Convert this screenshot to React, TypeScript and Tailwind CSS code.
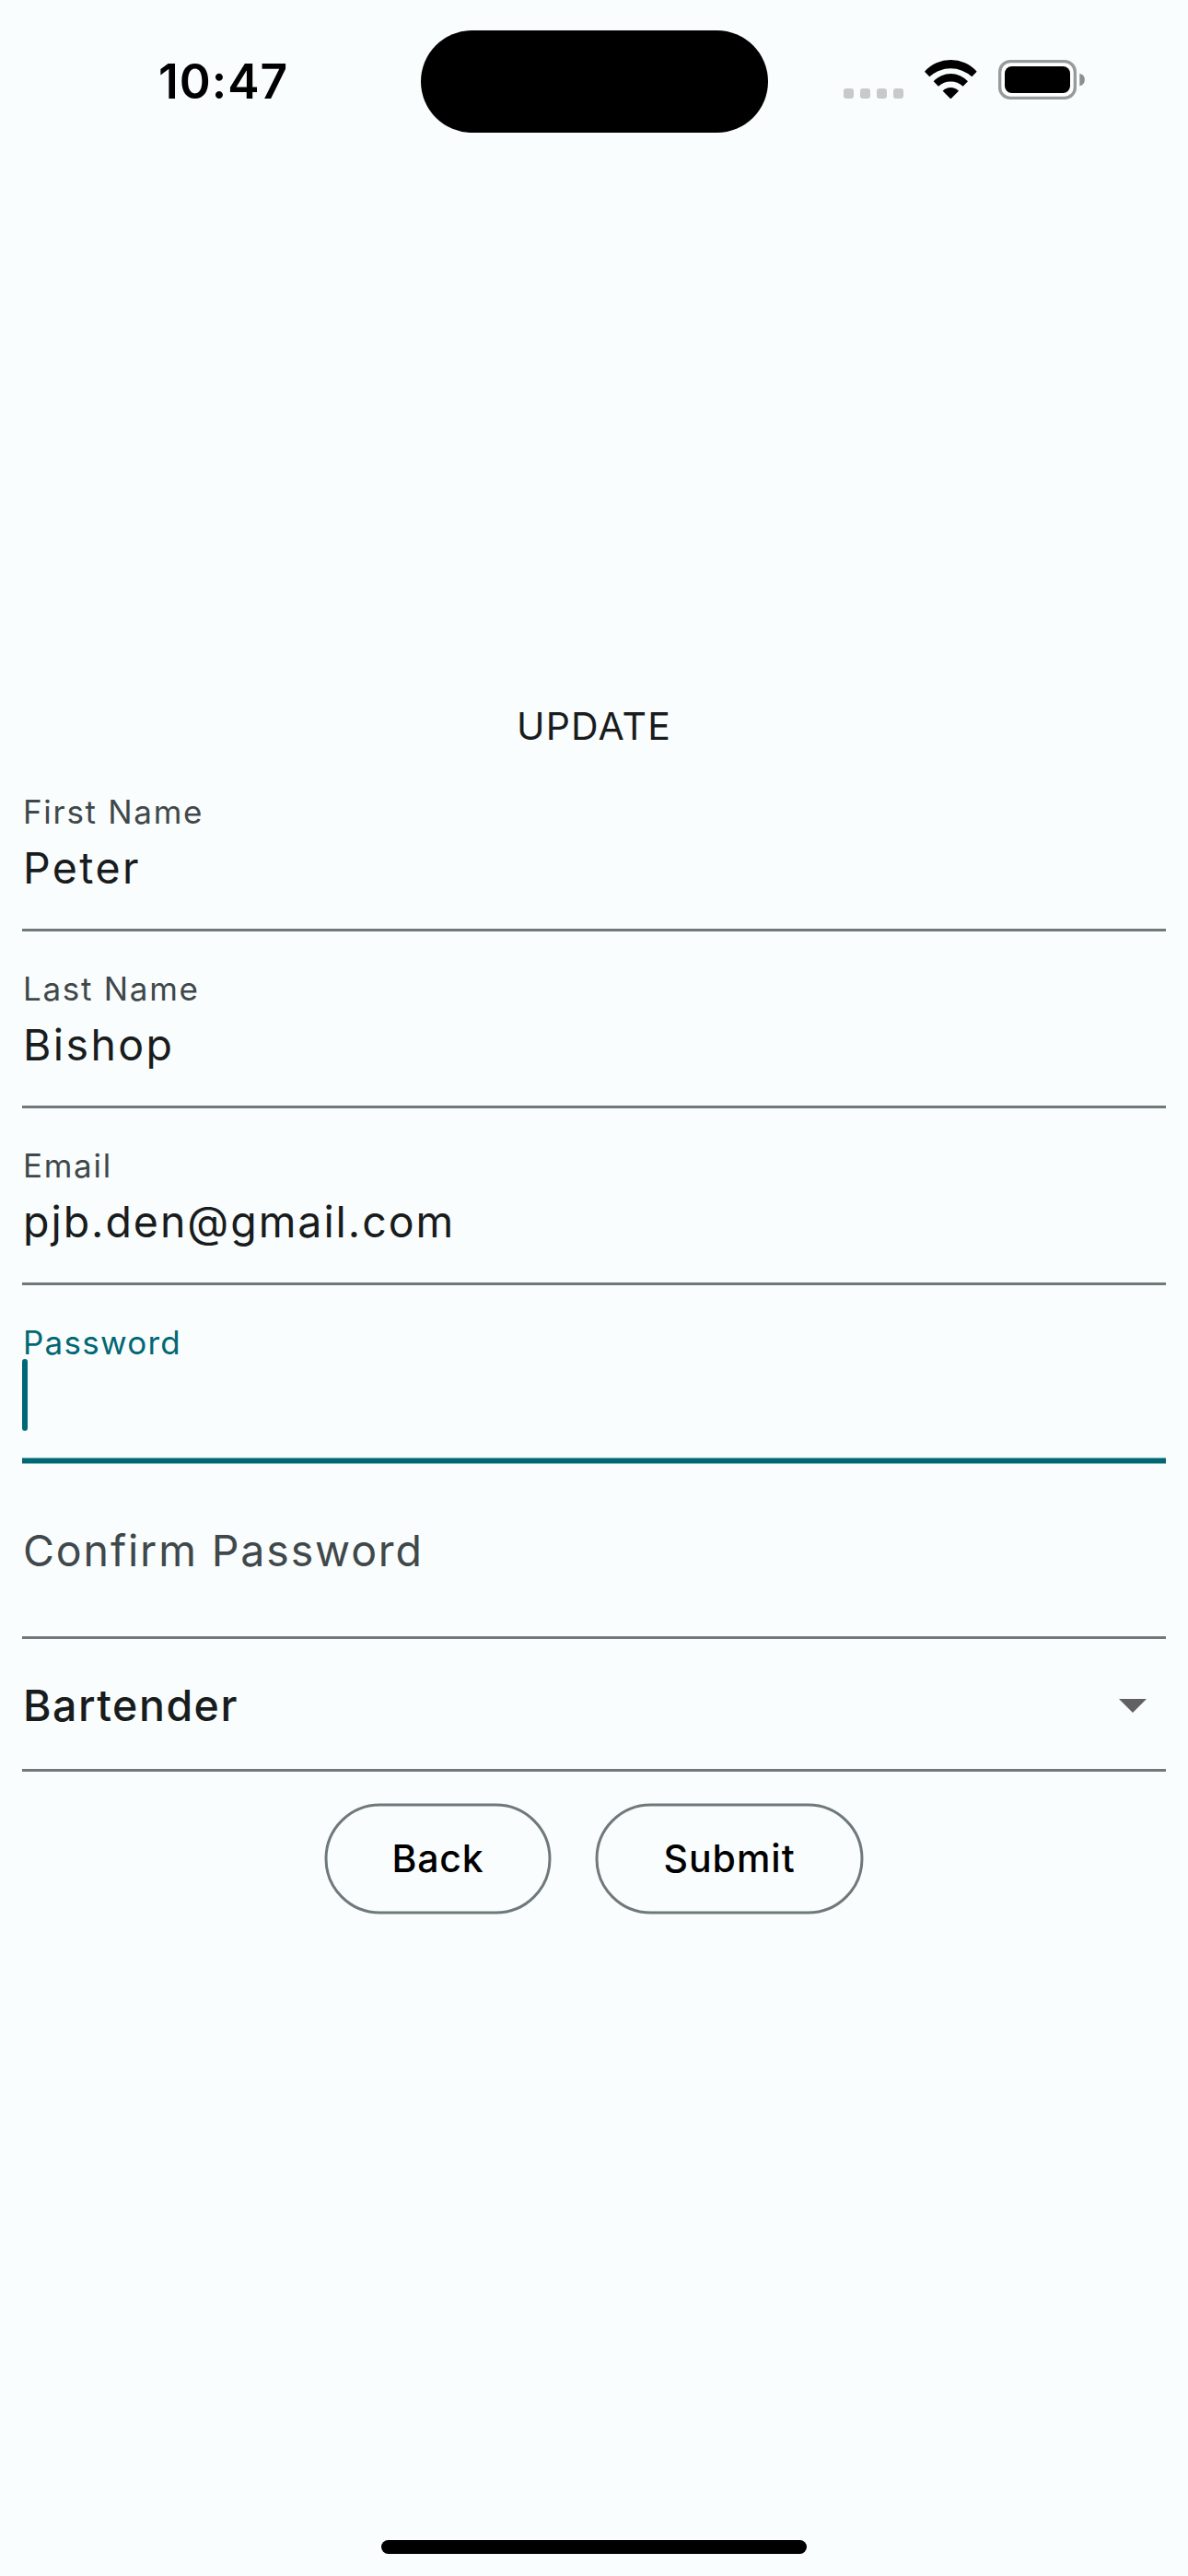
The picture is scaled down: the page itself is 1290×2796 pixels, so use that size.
import type { ReactNode } from 'react'

function StatusBar() {
  return (
    <header className="flex h-[177px] items-start text-black">
      <div className="mt-[58px] ml-[172px] w-[285px] text-[51.5px] leading-[60px] font-semibold tracking-[1px]">
        10:47
      </div>
      <div className="mt-[33px] h-[111px] w-[377px] rounded-full bg-black" />
      <div className="mt-[96px] ml-[82px] flex gap-[7px]">
        <i className="size-[11px] rounded-[3px] bg-[#c8cac9]" />
        <i className="size-[11px] rounded-[3px] bg-[#c8cac9]" />
        <i className="size-[11px] rounded-[3px] bg-[#c8cac9]" />
        <i className="size-[11px] rounded-[3px] bg-[#c8cac9]" />
      </div>
      <svg className="mt-[64px] ml-[22px] h-[44px] w-[59px]" viewBox="609 132 177 132">
        <path d="M612 173A114 114 0 0 1 782 173L766 190A102 102 0 0 0 628 190Z" />
        <path d="M641 205A75 75 0 0 1 753 205L737 221A59 59 0 0 0 657 221Z" />
        <path d="M671 236A36 36 0 0 1 723 236L699 260Q697 262 695 260Z" />
      </svg>
      <svg className="mt-[64px] ml-[21px] h-[45px] w-[96px]" viewBox="849 132 288 135">
        <rect x="857" y="140" width="245" height="119" rx="34" fill="white" stroke="#979b9b" strokeWidth="10" />
        <rect x="873" y="156" width="213" height="87" rx="23" />
        <path d="M1117 179A21 21 0 0 1 1117 220Z" fill="#8c8f8f" />
      </svg>
    </header>
  )
}

function Field({ label, children }: { label: string; children: ReactNode }) {
  return (
    <div className="flex h-[192px] flex-col border-b-[3px] border-[#6f7979] pt-[42px] pl-px">
      <div className="text-[35px] leading-[41px] tracking-[1.7px] text-[#3f484a]">{label}</div>
      <div className="text-[46.5px] leading-[80px] text-[#191c1d]">{children}</div>
    </div>
  )
}

function OutlinedButton({ className, children }: { className: string; children: ReactNode }) {
  return (
    <button
      type="button"
      className={`relative h-[120px] pl-px text-center text-[41px] leading-[120px] font-medium text-black ${className}`}
    >
      <span className="absolute inset-0 translate-x-[0.5px] translate-y-[0.5px] rounded-full border-[3px] border-[#6f7979]" />
      {children}
    </button>
  )
}

export default function App() {
  return (
    <div className="flex h-[2796px] w-[1290px] flex-col bg-[#fafdfd] font-['Inter',sans-serif]">
      <StatusBar />
      <main className="mt-[581px] flex flex-col px-[24px]">
        <h1 className="mb-[1px] h-[60px] text-center text-[41px] leading-[60px] tracking-[1.2px] text-[#191c1d]">
          UPDATE
        </h1>
        <form className="flex flex-col">
          <Field label="First Name">
            <span className="tracking-[2.4px]">Peter</span>
          </Field>
          <Field label="Last Name">
            <span className="tracking-[2.4px]">Bishop</span>
          </Field>
          <Field label="Email">
            <span className="tracking-[1.95px]">pjb.den@gmail.com</span>
          </Field>
          <div className="flex h-[192px] flex-col pt-[42px]">
            <div className="pl-px text-[35px] leading-[41px] tracking-[1.25px] text-[#006874]">Password</div>
            <div className="-mt-[3px] h-[78px] w-[6px] shrink-0 rounded-full bg-[#006874]" />
            <div className="mt-[29px] h-[7px] shrink-0 border-y border-[#7db4ba] bg-[#006874] bg-clip-padding" />
          </div>
          <div className="h-[192px] border-b-[3px] border-[#6f7979] pt-[56px] pl-px text-[46.5px] leading-[80px] tracking-[1.86px] text-[#3f484a]">
            Confirm Password
          </div>
          <div className="flex h-[144px] items-center justify-between border-b-[3px] border-[#6f7979] pt-[3px] pr-[21px] pl-px text-[46.5px] leading-[80px] font-medium tracking-[1.5px] text-[#191c1d]">
            Bartender
            <svg className="h-[15px] w-[30px]" viewBox="0 0 30 15">
              <path d="M0 0H30L15 15Z" fill="#616161" />
            </svg>
          </div>
          <div className="mt-[34px] flex gap-[48px] pl-[328px]">
            <OutlinedButton className="w-[246px] tracking-[0.8px]">Back</OutlinedButton>
            <OutlinedButton className="w-[291px] tracking-[1px]">Submit</OutlinedButton>
          </div>
        </form>
      </main>
      <footer className="mt-auto flex h-[39px] justify-center">
        <div className="h-[15px] w-[462px] rounded-full bg-black" />
      </footer>
    </div>
  )
}
